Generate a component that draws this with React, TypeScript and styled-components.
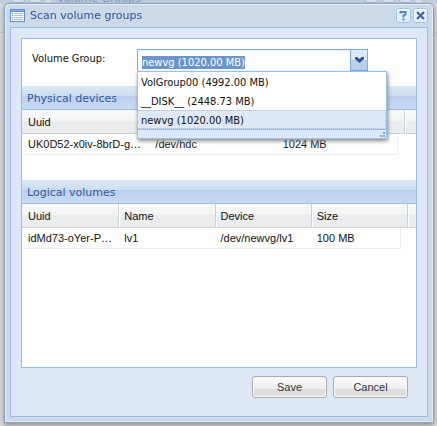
import React, { useEffect, useRef, useState } from "react";
import styled, { createGlobalStyle } from "styled-components";

const sans = `"Liberation Sans", Arial, sans-serif`;
const condensed = `"DejaVu Sans Condensed", "DejaVu Sans", sans-serif`;
const wide = `"DejaVu Sans", sans-serif`;

const GlobalStyle = createGlobalStyle`
  * { box-sizing: border-box; }
  body { margin: 0; background: #dadada; font: 11px ${sans}; color: #111; }
  button, input { font: inherit; margin: 0; }
`;

const Backdrop = styled.div`
  min-height: 100vh;
  background: #dcdcdc;
`;

const BackdropBar = styled.div`
  display: flex;
  align-items: flex-end;
  gap: 4px;
  height: 4px;
  padding: 0 16px 1px 12px;
  overflow: hidden;
  background: #c3cedd;
  color: #7c95bb;
  font: 11px/8px ${wide};
`;

const BackdropTool = styled.span`
  flex: none;
  width: 13px;
  height: 15px;
  border: 1px solid #a9bbd3;
  border-radius: 3px;
  background: #dfe4ec;
`;

const BackdropGap = styled.span`
  flex: none;
  width: 5px;
  height: 15px;
  background: #e2e4e8;
`;

const BackdropTitle = styled.span`
  flex: 1;
  padding-left: 2px;
  white-space: nowrap;
`;

const BackdropHeader = styled.div`
  height: 29px;
  background: #d9dadb;
  border-bottom: 1px solid #bfc0c1;
`;

const Dialog = styled.section`
  position: fixed;
  inset: 3px 3px 3px 4px;
  display: flex;
  flex-direction: column;
  padding: 0 5px 5px;
  border: 1px solid #87a5c6;
  border-radius: 5px 5px 0 0;
  background: #cdd9e8;
  box-shadow: inset 1px 1px #e6eef8, inset -1px -1px #e0e9f4, 0 2px 5px #888;
`;

const TitleBar = styled.header`
  display: flex;
  align-items: center;
  height: 23px;
  gap: 5px;
`;

const Title = styled.h1`
  flex: 1;
  margin: 0;
  color: #2c5399;
  font: 11px/16px ${wide};
`;

const Tools = styled.div`
  display: flex;
  gap: 2px;
`;

const Tool = styled.button`
  display: flex;
  width: 15px;
  height: 15px;
  padding: 0;
  border: 0;
  background: none;
`;

const DialogBody = styled.div`
  flex: 1;
  display: flex;
  flex-direction: column;
  padding: 10px 10px 0;
  border: 1px solid #99bbe8;
  background: #dee7f6;
`;

const Panel = styled.div`
  flex: 1;
  border: 1px solid #99bbe8;
  background: #fff;
`;

const FormRow = styled.div`
  display: flex;
  align-items: flex-start;
  padding: 10px 48px 14px 10px;
`;

const Label = styled.label`
  width: 105px;
  padding-top: 3px;
  font: 11px/14px ${condensed};
`;

const Combo = styled.div`
  position: relative;
  flex: 1;
  display: flex;
  height: 23px;
`;

const ComboInput = styled.input`
  flex: 1;
  min-width: 0;
  height: 23px;
  padding: 3px 4px 0;
  border: 1px solid #7eadd9;
  outline: 0;
  background: linear-gradient(#eef1f5, #fff 4px);
  font: 11px/14px ${condensed};
  &::selection { color: #fff; background: #6b95cb; }
`;

const ComboTrigger = styled.button`
  display: flex;
  justify-content: center;
  width: 17px;
  height: 22px;
  padding: 7px 0 0;
  border: 1px solid #7eadd9;
  border-left: 0;
  background: linear-gradient(#dce8f5 0 10px, #b9cfea 10px);
`;

const List = styled.ul`
  position: absolute;
  z-index: 1;
  top: 22px;
  left: 0;
  right: -19px;
  margin: 0;
  padding: 0;
  border: 1px solid #98c0f4;
  background: #fff;
  box-shadow: 1px 2px 4px #888;
  list-style: none;
`;

const Option = styled.li<{ $active: boolean }>`
  height: 19px;
  padding: 2px 3px 0;
  border: 1px dotted ${(p) => (p.$active ? "#a3bae9" : "#fff")};
  border-left-width: 0;
  background: ${(p) => (p.$active ? "#dfe8f6" : "#fff")};
  font: 11px/15px ${condensed};
  cursor: pointer;
`;

const Resizer = styled.li`
  display: flex;
  justify-content: flex-end;
  align-items: flex-end;
  height: 9px;
  border-top: 1px solid #99bbe8;
  background: #dce9fb;
`;

const SectionTitle = styled.h2`
  height: 24px;
  margin: 0;
  padding: 5px 5px 0;
  border-bottom: 1px solid #99bbe8;
  background: linear-gradient(#dce9f6, #cbdcf1 10px, #aec9ea 10px, #bdd1ee 11px, #c8daf2);
  color: #3058a0;
  font: 11px/16px ${wide};
`;

const GridBlock = styled.section<{ $gap?: boolean }>`
  min-height: ${(p) => (p.$gap ? "94px" : "0")};
`;

const HeaderBand = styled.div`
  height: 24px;
  background: linear-gradient(#fafafa 0 1px, #f9f9f9 1px, #f2f3f4 11px, #ebecee 11px, #e9ebed);
  border-bottom: 1px solid #d0d0d0;
`;

const Table = styled.table<{ $inset: number }>`
  width: calc(100% - ${(p) => p.$inset}px);
  table-layout: fixed;
  border-collapse: separate;
  border-spacing: 0;
  margin: -24px 0 0 1px;
`;

const HeadCell = styled.th`
  height: 24px;
  padding: 0 5px;
  border-right: 1px solid #d0d0d0;
  box-shadow: 1px 0 #fff;
  text-align: left;
  font-weight: normal;
`;

const Cell = styled.td`
  padding: 0;
  &:last-child > div {
    margin-right: 7px;
    border-right: 1px solid #ededed;
  }
`;

const CellText = styled.div`
  height: 21px;
  padding: 0 5px;
  border-bottom: 1px solid #ededed;
  line-height: 20px;
  overflow: hidden;
  white-space: nowrap;
  text-overflow: ellipsis;
`;

const Buttons = styled.footer`
  display: flex;
  justify-content: flex-end;
  gap: 6px;
  padding: 8px 9px 18px;
`;

const ActionButton = styled.button`
  width: 75px;
  height: 22px;
  padding: 0;
  border: 1px solid #aaa;
  border-radius: 3px;
  background: linear-gradient(#fafafa, #eee 12px, #dcdcdc 12px, #e1e1e1);
  box-shadow: inset 0 0 0 1px #f8f8f8;
  color: #333;
  font: 11px/14px ${sans};
`;

function ListIcon() {
  return (
    <svg width="15" height="13" viewBox="0 0 15 13" aria-hidden="true">
      <path fill="#5f8dcb" d="M0 0h15v13H0z" />
      <path fill="#8eb4e5" d="M1 1h13v1H1z" />
      <path fill="#fff" d="M1 3h13v9H1z" />
      <path stroke="#4f9bda" d="M2 4.5h1M2 6.5h1M2 8.5h1M2 10.5h1" />
      <path stroke="#b9bec6" d="M4 4.5h9M4 6.5h9M4 8.5h9M4 10.5h9" />
    </svg>
  );
}

function ToolIcon({ kind }: { kind: "help" | "close" }) {
  return (
    <svg width="15" height="15" viewBox="0 0 15 15" fill="none" aria-hidden="true">
      <rect x=".5" y=".5" width="14" height="14" rx="2.5" fill="#e3efff" stroke="#9dc1ec" />
      <path stroke="#fff" d="M2 1.5h11M1.5 2v10" />
      {kind === "help" ? (
        <path stroke="#5585bc" strokeWidth="2" d="M4.5 5.5V4h5v2.500l-2 1V9.500M6.500 11.500h2" />
      ) : (
        <path stroke="#3e5ca8" strokeWidth="2" d="m4 4 7 7m0-7-7 7" />
      )}
    </svg>
  );
}

const groups = ["VolGroup00 (4992.00 MB)", "__DISK__ (2448.73 MB)", "newvg (1020.00 MB)"];

function GroupCombo() {
  const [value, setValue] = useState(groups[2]);
  const [open, setOpen] = useState(true);
  const input = useRef<HTMLInputElement>(null);
  useEffect(() => {
    input.current?.focus();
    input.current?.select();
  }, [value]);
  return (
    <Combo>
      <ComboInput
        id="volume-group"
        ref={input}
        role="combobox"
        aria-expanded={open}
        aria-controls="volume-groups"
        value={value}
        readOnly
      />
      <ComboTrigger type="button" aria-label="Show volume groups" onClick={() => setOpen(!open)}>
        <svg width="9" height="6" viewBox="0 0 9 6" aria-hidden="true">
          <path fill="#2f4f8f" d="M0 0h2l2.500 2L7 0h2v2L4.500 6 0 2z" />
        </svg>
      </ComboTrigger>
      {open && (
        <List id="volume-groups" role="listbox">
          {groups.map((g) => (
            <Option
              key={g}
              role="option"
              aria-selected={g === value}
              $active={g === value}
              onClick={() => {
                setValue(g);
                setOpen(false);
              }}
            >
              {g}
            </Option>
          ))}
          <Resizer role="presentation">
            <svg width="7" height="7" viewBox="0 0 7 7" aria-hidden="true">
              <path fill="#72a5e3" d="M4 1h2v2H4zM1 4h2v2H1zM4 4h2v2H4z" />
            </svg>
          </Resizer>
        </List>
      )}
    </Combo>
  );
}

type GridProps = { title: string; columns: string[]; row: string[]; inset: number; gap?: boolean };

function Grid({ title, columns, row, inset, gap }: GridProps) {
  return (
    <GridBlock $gap={gap}>
      <SectionTitle>{title}</SectionTitle>
      <HeaderBand />
      <Table $inset={inset} aria-label={title}>
        <thead>
          <tr>{columns.map((c, i) => <HeadCell key={i} scope="col">{c}</HeadCell>)}</tr>
        </thead>
        <tbody>
          <tr>{row.map((c) => <Cell key={c}><CellText>{c}</CellText></Cell>)}</tr>
        </tbody>
      </Table>
    </GridBlock>
  );
}

export default function App() {
  return (
    <>
      <GlobalStyle />
      <Backdrop>
        <BackdropBar aria-hidden="true">
          <BackdropTool />
          <BackdropTool />
          <BackdropGap />
          <BackdropTitle>Volume Groups</BackdropTitle>
          <BackdropTool />
          <BackdropTool />
          <BackdropTool />
          <BackdropGap />
        </BackdropBar>
        <BackdropHeader />
      </Backdrop>
      <Dialog role="dialog" aria-labelledby="dialog-title">
        <TitleBar>
          <ListIcon />
          <Title id="dialog-title">Scan volume groups</Title>
          <Tools>
            <Tool type="button" aria-label="Help"><ToolIcon kind="help" /></Tool>
            <Tool type="button" aria-label="Close"><ToolIcon kind="close" /></Tool>
          </Tools>
        </TitleBar>
        <DialogBody>
          <Panel>
            <FormRow>
              <Label htmlFor="volume-group">Volume Group:</Label>
              <GroupCombo />
            </FormRow>
            <Grid
              title="Physical devices"
              columns={["Uuid", "", ""]}
              row={["UK0D52-x0iv-8brD-gkPa", "/dev/hdc", "1024 MB"]}
              inset={12}
              gap
            />
            <Grid
              title="Logical volumes"
              columns={["Uuid", "Name", "Device", "Size"]}
              row={["idMd73-oYer-PzTc", "lv1", "/dev/newvg/lv1", "100 MB"]}
              inset={9}
            />
          </Panel>
          <Buttons>
            <ActionButton type="button">Save</ActionButton>
            <ActionButton type="button">Cancel</ActionButton>
          </Buttons>
        </DialogBody>
      </Dialog>
    </>
  );
}
